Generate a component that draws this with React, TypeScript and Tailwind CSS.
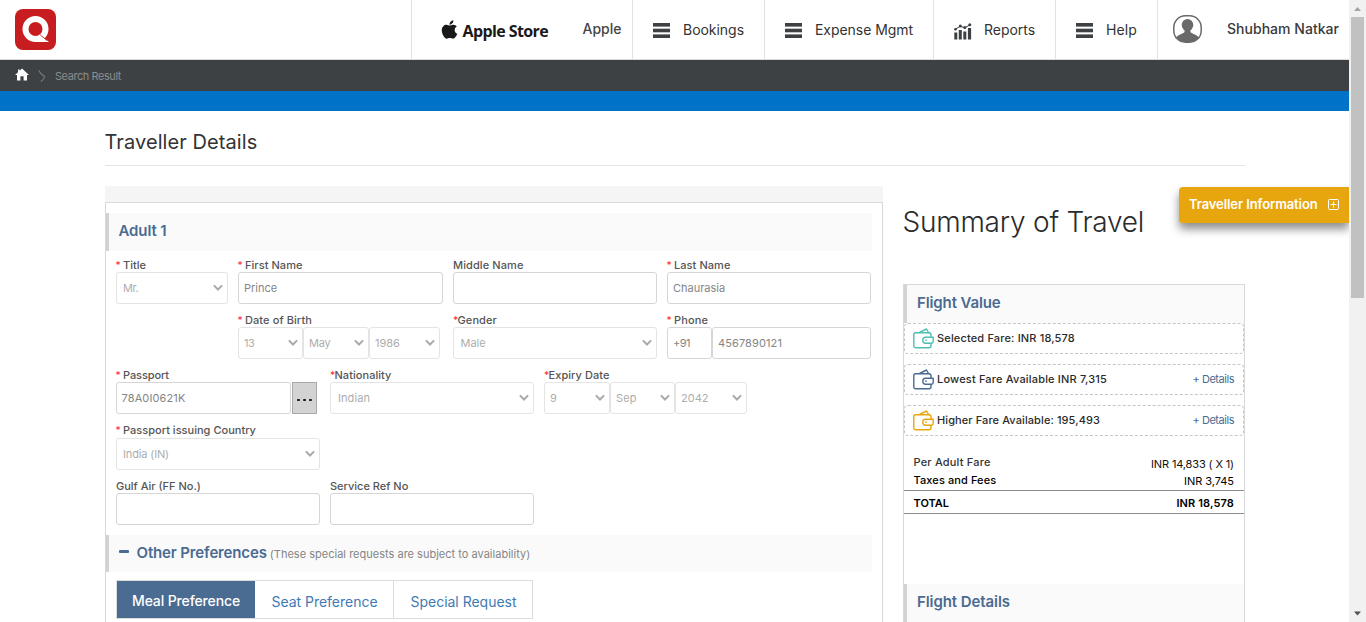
import React, { type ReactNode } from "react";
import { FaApple } from "react-icons/fa";

function Logo() {
  return (
    <svg width="41" height="41" viewBox="0 0 41 41">
      <rect width="41" height="41" rx="8" fill="#c81d20" />
      <circle cx="20.5" cy="20" r="10" fill="none" stroke="#fff" strokeWidth="6" />
      <path d="M25 25.5L34 33H20L24 30Z" fill="#fff" />
      <path d="M25.2 25.8L32 31.5" stroke="#c81d20" strokeWidth="0.9" />
    </svg>
  );
}

function Bars() {
  return (
    <svg width="17" height="15" viewBox="0 0 17 15" fill="#3d4143" className="-mt-px">
      <rect width="17" height="3.6" />
      <rect y="5.7" width="17" height="3.6" />
      <rect y="11.4" width="17" height="3.6" />
    </svg>
  );
}

function ReportIcon() {
  return (
    <svg width="18" height="17" viewBox="0 0 18 17" className="mt-px" fill="#3d4143">
      <rect x="0.3" y="9.5" width="3" height="7" />
      <rect x="4.8" y="7" width="3" height="9.5" />
      <rect x="9.3" y="8.5" width="3" height="8" />
      <rect x="13.9" y="5" width="3.2" height="11.5" />
      <path d="M1.5 6L6.3 3.3L10.8 4.8L16 1.8" fill="none" stroke="#3d4143" strokeWidth="1" />
      <circle cx="1.5" cy="6.2" r="1.3" />
      <circle cx="6.3" cy="3" r="1.5" />
      <circle cx="10.8" cy="4.5" r="1.5" />
      <circle cx="15.8" cy="1.8" r="1.5" />
    </svg>
  );
}

function Avatar() {
  return (
    <svg width="29" height="28" viewBox="0 0 29 28" className="-mt-px">
      <defs>
        <clipPath id="avatar">
          <rect x="1" y="1" width="27" height="26" rx="11" />
        </clipPath>
      </defs>
      <g clipPath="url(#avatar)" fill="#696969">
        <ellipse cx="14.5" cy="10" rx="5.8" ry="6" />
        <path d="M11.5 13H17.5V17C18.5 19 26 19.5 27 25V28H2V25C3 19.5 10.5 19 11.5 17Z" />
      </g>
      <rect x="0.8" y="0.8" width="27.4" height="26.4" rx="11.5" fill="none" stroke="#696969" strokeWidth="1.5" />
    </svg>
  );
}

function Wallet({ color }: { color: string }) {
  return (
    <svg width="21" height="21" viewBox="0 0 21 21" fill="none" stroke={color} strokeWidth="1.4" strokeLinejoin="round" className="-mt-px">
      <path d="M18 9V7Q18 4.8 16 4.8H2.5Q0.8 4.8 0.8 6.5V18Q0.8 19.7 2.5 19.7H16Q18 19.7 18 17.7V15.5" />
      <path d="M6.5 4.5L13.5 1L15.5 4.5" />
      <path d="M20.2 9.2H12.5Q9.8 9.2 9.8 12.2Q9.8 15.2 12.5 15.2H18.5Q20.2 15.2 20.2 13.5Z" />
      <path d="M12.3 12.2H13.8" />
    </svg>
  );
}

function Chevron() {
  return (
    <svg width="10" height="8" viewBox="0 0 10 8" className="shrink-0">
      <path d="M0.9 1.4L5 5.5L9.1 1.4" fill="none" stroke="#a9a9a9" strokeWidth="2" />
    </svg>
  );
}

function Label({ children, star, tight }: { children: ReactNode; star?: boolean; tight?: boolean }) {
  return (
    <div className="flex h-[14px] items-center text-[11px] leading-[14px] font-medium whitespace-nowrap text-[#555]">
      {star && <span className={tight ? "w-[4.5px] text-[10px] text-[#f33]" : "-ml-[0.5px] w-[7.5px] text-[10px] text-[#f33]"}>*</span>}
      {children}
    </div>
  );
}

function Select({ w, children, pl = "pl-[5px]" }: { w: string; children: ReactNode; pl?: string }) {
  return (
    <div className={`${w} ${pl} flex h-8 shrink-0 items-center justify-between rounded-[3px] border border-[#e4e4e4] bg-white pr-1 text-[11px] text-[#adadad]`}>
      {children}
      <Chevron />
    </div>
  );
}

function Input({ w, children }: { w: string; children?: ReactNode }) {
  return (
    <div className={`${w} flex h-8 shrink-0 items-center rounded-[3px] border border-[#d6d6d6] bg-white pl-[5px] text-[11px] text-[#858585]`}>
      {children}
    </div>
  );
}

function Section({ children, h = "h-[38px]" }: { children: ReactNode; h?: string }) {
  return (
    <div className={`${h} flex shrink-0 items-center border-l-[3px] border-[#d2d2d2] bg-[#fafafa] text-[15px] font-semibold text-[#4a6b92]`}>
      {children}
    </div>
  );
}

function NavItem({ w, icon, children }: { w: string; icon: ReactNode; children: ReactNode }) {
  return (
    <div className={`${w} flex shrink-0 items-center gap-[13px] border-l border-[#e2e2e2] pt-[2px] pl-5 text-[14px] text-[#333]`}>
      {icon}
      <span className="-mt-[2px] whitespace-nowrap">{children}</span>
    </div>
  );
}

function Fare({ color, children, details }: { color: string; children: ReactNode; details?: boolean }) {
  return (
    <div className="flex h-[31px] items-center rounded border border-dashed border-[#c6c6c6] pr-[9px] pl-2 text-[11px] font-medium text-[#2b2b2b]">
      <Wallet color={color} />
      <div className="ml-[3px] flex-1 whitespace-nowrap">{children}</div>
      {details && <span className="font-normal tracking-[-0.47px] text-[#4a6b92]">+ Details</span>}
    </div>
  );
}

export default function App() {
  return (
    <div className="flex h-[622px] w-[1366px] overflow-hidden bg-white font-['Inter',sans-serif] text-[#333]">
      <div className="relative flex w-[1349px] shrink-0 flex-col">
        <header className="flex h-[60px] shrink-0 border-b border-[#dcdcdc]">
          <div className="w-[411px] shrink-0 pt-[9px] pl-[15px]">
            <Logo />
          </div>
          <div className="flex w-[221px] shrink-0 items-center border-l border-[#e2e2e2] pl-[27.5px]">
            <FaApple className="-mt-px h-[21px] w-[19px] text-[#1b1819]" />
            <span className="mt-[3px] ml-1 w-[120px] font-['Open_Sans',sans-serif] text-[16px] font-bold tracking-[-0.6px] whitespace-nowrap text-[#1b1819]">
              Apple Store
            </span>
            <span className="-mt-[2px] text-[14px] font-medium text-[#444]">Apple</span>
          </div>
          <NavItem w="w-[132px]" icon={<Bars />}>
            <span className="tracking-[-0.03px]">Bookings</span>
          </NavItem>
          <NavItem w="w-[169px]" icon={<Bars />}>
            <span className="tracking-[-0.05px]">Expense Mgmt</span>
          </NavItem>
          <NavItem w="w-[122px]" icon={<ReportIcon />}>
            <span className="-ml-px tracking-[-0.04px]">Reports</span>
          </NavItem>
          <NavItem w="w-[102px]" icon={<Bars />}>
            <span className="tracking-[0.12px]">Help</span>
          </NavItem>
          <div className="flex flex-1 items-center border-l border-[#e2e2e2] pl-[15px]">
            <Avatar />
            <span className="-mt-[2px] ml-[25px] text-[14px] font-medium tracking-[0.03px] whitespace-nowrap text-[#3a3a3a]">Shubham Natkar</span>
          </div>
        </header>

        <nav className="flex h-[31px] shrink-0 items-center bg-[#3d4143] pl-[15px] text-[11px] text-[#8b8d8e]">
          <svg width="14" height="13" viewBox="0 0 14 13" className="mb-[3px]" fill="#fff">
            <path d="M7 0.5L14 7H12V12.5H8.6V8.2H5.4V12.5H2V7H0L3 4.2V1.5H4.6V2.7Z" />
          </svg>
          <svg width="8" height="12" viewBox="0 0 8 12" className="mt-px ml-[9px]">
            <path d="M0.8 0.5Q2 3.5 6.6 6.5Q6.5 9 3 11.5" fill="none" stroke="#77797a" strokeWidth="1.2" />
          </svg>
          <span className="mt-[2px] ml-[9px] tracking-[-0.44px]">Search Result</span>
        </nav>
        <div className="h-5 shrink-0 bg-[#0073c8]" />

        <main className="ml-[105px] flex w-[1140px] flex-col">
          <h1 className="h-[55px] border-b border-[#e4e4e4] pt-[16px] text-[20px] leading-[30px] tracking-[0.08px] text-[#333]">
            <span className="-ml-[0.5px]">Traveller Details</span>
          </h1>
          <div className="flex gap-5">
            <section className="mt-5 flex w-[778px] shrink-0 flex-col">
              <div className="h-4 bg-[#f5f5f5]" />
              <div className="flex h-[430px] flex-col border border-[#d8d8d8] pt-[10px] pr-[10px]">
                <Section>
                  <span className="-mt-[2px] pl-[9.5px] tracking-[-0.11px]">Adult 1</span>
                </Section>

                <div className="mt-[7px] flex gap-[10px] pl-[10px]">
                  <div>
                    <Label star>Title</Label>
                    <Select w="w-[112px]" pl="pl-[6px]"><span className="tracking-[-0.5px]">Mr.</span></Select>
                  </div>
                  <div>
                    <Label star><span className="tracking-[0.06px]">First Name</span></Label>
                    <Input w="w-[205px]">Prince</Input>
                  </div>
                  <div>
                    <Label><span className="tracking-[0.1px]">Middle Name</span></Label>
                    <Input w="w-[204px]" />
                  </div>
                  <div>
                    <Label star><span className="tracking-[0.07px]">Last Name</span></Label>
                    <Input w="w-[204px]">Chaurasia</Input>
                  </div>
                </div>

                <div className="mt-[9px] flex gap-[10px] pl-[132px]">
                  <div className="w-[205px]">
                    <Label star><span className="tracking-[0.09px]">Date of Birth</span></Label>
                    <div className="flex">
                      <Select w="w-[65px]"><span className="tracking-[-0.38px]">13</span></Select>
                      <Select w="w-[66px]"><span className="tracking-[-0.21px]">May</span></Select>
                      <Select w="w-[71px]">1986</Select>
                    </div>
                  </div>
                  <div>
                    <Label star tight><span className="tracking-[0.1px]">Gender</span></Label>
                    <Select w="w-[204px]" pl="pl-[6.5px]">Male</Select>
                  </div>
                  <div>
                    <Label star><span className="tracking-[0.15px]">Phone</span></Label>
                    <div className="flex">
                      <Input w="w-[45px]"><span className="tracking-[-0.52px]">+91</span></Input>
                      <Input w="w-[159px]"><span className="tracking-[0.11px]">4567890121</span></Input>
                    </div>
                  </div>
                </div>

                <div className="mt-[9px] flex gap-[10px] pl-[10px]">
                  <div className="w-[204px]">
                    <Label star><span className="tracking-[-0.09px]">Passport</span></Label>
                    <div className="flex gap-px">
                      <Input w="w-[175px]"><span className="-ml-[0.5px] tracking-[0.13px]">78A0I0621K</span></Input>
                      <div className="flex h-8 w-[25px] items-center justify-center gap-[3px] border border-[#a9a9a9] bg-[#d3d3d3] pt-[3px]">
                        <i className="h-[2px] w-[3px] rounded-[1px] bg-[#111]" />
                        <i className="h-[2px] w-[3px] rounded-[1px] bg-[#111]" />
                        <i className="h-[2px] w-[3px] rounded-[1px] bg-[#111]" />
                      </div>
                    </div>
                  </div>
                  <div>
                    <Label star tight><span className="tracking-[0.05px]">Nationality</span></Label>
                    <Select w="w-[204px]" pl="pl-[7px]"><span className="tracking-[0.08px]">Indian</span></Select>
                  </div>
                  <div>
                    <Label star tight><span className="tracking-[0.06px]">Expiry Date</span></Label>
                    <div className="flex">
                      <Select w="w-[66px]">9</Select>
                      <Select w="w-[65px]"><span className="tracking-[0.1px]">Sep</span></Select>
                      <Select w="w-[72px]">2042</Select>
                    </div>
                  </div>
                </div>

                <div className="mt-[9px] flex flex-col gap-px pl-[10px]">
                  <Label star><span className="tracking-[0.02px]">Passport issuing Country</span></Label>
                  <Select w="w-[204px]" pl="pl-[6px]"><span className="tracking-[-0.14px]">India (IN)</span></Select>
                </div>

                <div className="mt-[9px] flex gap-[10px] pl-[10px]">
                  <div>
                    <Label>Gulf Air (FF No.)</Label>
                    <Input w="w-[204px]" />
                  </div>
                  <div>
                    <Label>Service Ref No</Label>
                    <Input w="w-[204px]" />
                  </div>
                </div>

                <div className="mt-[10px]">
                  <Section h="h-[37px]">
                    <div className="mb-1 ml-[10px] h-[3px] w-[10px] rounded-[1px] bg-[#4a6b92]" />
                    <span className="ml-[7.5px] tracking-[-0.14px]">Other Preferences</span>
                    <span className="mt-px ml-[3px] text-[11px] font-normal tracking-[0.01px] text-[#858585]">(These special requests are subject to availability)</span>
                  </Section>
                </div>

                <div className="mt-2 ml-[10px] flex h-[39px] w-[417px] border border-[#dcdcdc] text-[14px] text-[#3f7ab5]">
                  <div className="flex w-[138px] items-center justify-center bg-[#4a6b92] pt-px font-medium tracking-[-0.13px] text-white">Meal Preference</div>
                  <div className="flex w-[139px] items-center justify-center border-r border-[#dcdcdc] pt-[3px] pl-px tracking-[-0.02px]">Seat Preference</div>
                  <div className="flex flex-1 items-center justify-center pt-[3px] pl-px tracking-[-0.02px]">Special Request</div>
                </div>
              </div>
            </section>

            <aside className="flex w-[342px] flex-col">
              <h2 className="h-[118px] pt-[36px] text-[28px] leading-[40px] font-light tracking-[-0.23px] whitespace-nowrap text-[#2b2b2b]">
                <span className="-ml-[0.5px]">Summary of Travel</span>
              </h2>
              <div className="flex h-[400px] flex-col border border-[#d8d8d8]">
                <Section>
                  <span className="-mt-[2px] pl-[10px] tracking-[-0.12px]">Flight Value</span>
                </Section>
                <div className="flex flex-col gap-[10px]">
                  <Fare color="#4dbfb3"><span className="tracking-[0.16px]">Selected Fare: INR 18,578</span></Fare>
                  <Fare color="#4a6b92" details><span className="tracking-[0.18px]">Lowest Fare Available INR 7,315</span></Fare>
                  <Fare color="#e8a60e" details><span className="tracking-[0.1px]">Higher Fare Available: 195,493</span></Fare>
                </div>
                <div className="mt-[17px] flex justify-between pr-[10px] pl-[9.5px] text-[11px] leading-[18px]">
                  <span className="font-medium tracking-[0.19px] text-[#333]">Per Adult Fare</span>
                  <span className="mt-[2px] -mb-[2px] tracking-[-0.13px] text-[#111]">INR 14,833 ( X 1)</span>
                </div>
                <div className="flex justify-between pr-[10px] pl-[9.5px] text-[11px] leading-[18px] text-black">
                  <span className="font-medium tracking-[0.1px]">Taxes and Fees</span>
                  <span className="mt-px -mb-px tracking-[-0.04px]">INR 3,745</span>
                </div>
                <div className="mt-px flex h-6 items-center justify-between border-y border-[#8c8c8c] pt-[3px] pr-[10px] pl-[9.5px] text-[11px] font-semibold text-black">
                  <span>TOTAL</span>
                  <span className="tracking-[0.12px]">INR 18,578</span>
                </div>
                <div className="mt-[70px]">
                  <Section>
                    <span className="-mt-[2px] pl-[10px] tracking-[-0.08px]">Flight Details</span>
                  </Section>
                </div>
              </div>
            </aside>
          </div>
        </main>

        <button className="absolute top-[187px] right-0 flex h-9 w-[170px] items-center justify-between rounded-l bg-[#e8a60e] pr-[10px] pl-[10px] text-[13px] font-semibold tracking-[-0.1px] whitespace-nowrap text-white shadow-[0_6px_10px_rgba(0,0,0,0.45)]">
          Traveller Information
          <svg width="11" height="11" viewBox="0 0 11 11" className="mb-[2px]" fill="none" stroke="#fff">
            <rect x="0.5" y="0.5" width="10" height="10" rx="1" />
            <path d="M5.5 2.5V8.5M2.5 5.5H8.5" />
          </svg>
        </button>
      </div>

      <div className="z-10 flex w-[17px] shrink-0 flex-col items-center justify-between bg-[#f1f1f1]">
        <div className="flex flex-col items-center">
          <svg width="17" height="17" viewBox="0 0 17 17">
            <path d="M5 11L8.5 7L12 11Z" fill="#a3a3a3" />
          </svg>
          <div className="h-[281px] w-[13px] bg-[#c1c1c1]" />
        </div>
        <svg width="17" height="17" viewBox="0 0 17 17">
          <path d="M5 6.5L8.5 10.5L12 6.5Z" fill="#505050" />
        </svg>
      </div>
    </div>
  );
}
